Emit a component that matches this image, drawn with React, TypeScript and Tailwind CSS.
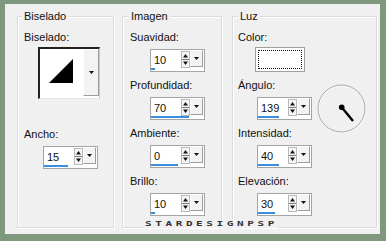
import React from "react";

function SpinArrows() {
  return (
    <svg width="9" height="17" viewBox="0 0 9 17" className="block">
      <rect x="0.5" y="0.5" width="8" height="16" fill="#f6f6f6" stroke="#b8b8b8" />
      <path d="M2 6.5 L4.5 3 L7 6.5 Z" fill="#111" />
      <line x1="1" y1="8.5" x2="8" y2="8.5" stroke="#7a7a7a" />
      <path d="M2 10.5 L4.5 14 L7 10.5 Z" fill="#111" />
    </svg>
  );
}

function DropBtn({ h }: { h: string }) {
  return (
    <div
      className={`${h} flex items-center justify-center bg-[#f3f3f3] border border-t-white border-l-white border-r-[#9c9c9c] border-b-[#9c9c9c]`}
    >
      <svg width="5" height="3" viewBox="0 0 5 3" className="block">
        <path d="M0 0 L5 0 L2.5 3 Z" fill="#111" />
      </svg>
    </div>
  );
}

function Spinner({ value, bar, ml }: { value: string; bar: number; ml: string }) {
  return (
    <div className={`${ml} mt-[5px] w-[55px] h-[23px] border border-[#a4a4a4] bg-white flex flex-col`}>
      <div className="flex items-start h-[18px]">
        <span className="flex-1 pl-[3px] pt-[4px]">{value}</span>
        <div className="mt-[1px]">
          <SpinArrows />
        </div>
        <div className="w-[13px] mr-[1px]">
          <DropBtn h="h-[17px]" />
        </div>
      </div>
      <div className="h-[2px]">
        <div className="h-[2px] bg-[#3a8ee2]" style={{ width: `${bar}px` }} />
      </div>
    </div>
  );
}

const fs =
  "h-[218px] border border-[#dcdcdc] shadow-[inset_1px_1px_0_#ffffff,1px_1px_0_#ffffff] flex flex-col items-start pt-[8px]";

export default function App() {
  return (
    <div className="w-[386px] h-[241px] bg-[#7f977c] pt-[4px] pl-[5px] font-['Liberation_Sans',Arial,sans-serif] text-[11px] leading-[13px] text-[#111]">
      <div className="relative w-[375px] h-[230px] bg-[#f0f0f0] flex items-start pl-[12px] pt-[6px]">
        {/* Biselado */}
        <fieldset className={`${fs} w-[97px] pl-[6px]`}>
          <legend className="-ml-[2px] px-[2px] leading-[13px] bg-[#f0f0f0]">Biselado</legend>
          <span>Biselado:</span>
          <div className="ml-[14px] mt-[3px] w-[62px] h-[52px] flex border-t-2 border-l-2 border-r border-b border-t-[#222] border-l-[#222] border-r-[#c8c8c8] border-b-[#e6e6e6] bg-white">
            <svg width="43" height="49" viewBox="0 0 43 49" className="block">
              <path d="M9 34 L33 10 L33 34 Z" fill="#000" />
            </svg>
            <div className="w-[16px]">
              <DropBtn h="h-[47px]" />
            </div>
          </div>
          <span className="mt-[29px]">Ancho:</span>
          <Spinner value="15" bar={24} ml="ml-[19px]" />
        </fieldset>

        {/* Imagen */}
        <fieldset className={`${fs} ml-[8px] w-[100px] pl-[7px]`}>
          <legend className="-ml-[1px] px-[2px] leading-[13px] bg-[#f0f0f0]">Imagen</legend>
          <span>Suavidad:</span>
          <Spinner value="10" bar={4} ml="ml-[20px]" />
          <span className="mt-[7px]">Profundidad:</span>
          <Spinner value="70" bar={38} ml="ml-[20px]" />
          <span className="mt-[7px]">Ambiente:</span>
          <Spinner value="0" bar={27} ml="ml-[20px]" />
          <span className="mt-[7px]">Brillo:</span>
          <Spinner value="10" bar={4} ml="ml-[20px]" />
        </fieldset>

        {/* Luz */}
        <fieldset className={`${fs} ml-[10px] w-[145px] pl-[5px]`}>
          <legend className="px-[2px] leading-[13px] bg-[#f0f0f0]">Luz</legend>
          <span>Color:</span>
          <div className="ml-[17px] mt-[3px] w-[50px] h-[25px] border border-[#a0a0a0] bg-white p-[2px]">
            <div className="h-full border border-dotted border-[#111]" />
          </div>
          <div className="mt-[7px] flex items-start">
            <div className="w-[74px] flex flex-col items-start">
              <span>Ángulo:</span>
              <Spinner value="139" bar={21} ml="ml-[19px]" />
            </div>
            <svg width="51" height="50" viewBox="0 0 51 50" className="block ml-[4px] mt-[4px] -mb-[13px]">
              <circle cx="25.5" cy="25.5" r="23.5" fill="none" stroke="#ffffff" strokeWidth="1" transform="translate(0.7 0.7)" />
              <circle cx="25.5" cy="25.5" r="23.5" fill="none" stroke="#a9a9a9" strokeWidth="1" />
              <line x1="25.7" y1="24.3" x2="37" y2="38" stroke="#000" strokeWidth="2.4" />
              <circle cx="25.7" cy="24.3" r="2.8" fill="#000" />
            </svg>
          </div>
          <span className="mt-[7px]">Intensidad:</span>
          <Spinner value="40" bar={21} ml="ml-[19px]" />
          <span className="mt-[7px]">Elevación:</span>
          <Spinner value="30" bar={17} ml="ml-[19px]" />
        </fieldset>

        <div className="absolute left-[140px] top-[216px] h-[8px] bg-[#f0f0f0] overflow-hidden">
          <div className="origin-top-left scale-y-[0.62] font-['DejaVu_Sans_Mono',monospace] font-bold text-[11px] leading-[11px] tracking-[3.6px] text-[#333]">
            STARDESIGNPSP
          </div>
        </div>
      </div>
    </div>
  );
}
